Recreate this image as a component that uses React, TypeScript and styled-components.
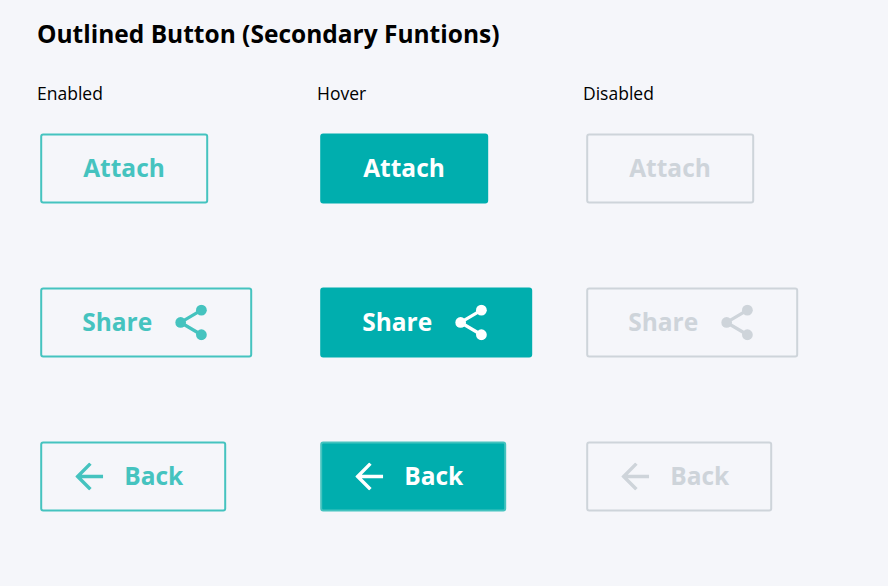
import React from 'react';
import styled, { createGlobalStyle, css } from 'styled-components';

type State = 'enabled' | 'hover' | 'disabled';
type Kind = 'attach' | 'share' | 'back';

const GlobalStyle = createGlobalStyle`
  body { margin: 0; background: #f5f6fa; }
  * { box-sizing: border-box; }
`;

const Page = styled.main`
  width: 888px;
  height: 586px;
  padding: 16px 0 0 37px;
  background: #f5f6fa;
  color: #000;
  font-family: 'Open Sans', 'Noto Sans', sans-serif;
`;

const Title = styled.h1`
  margin: 0;
  font-size: 24.5px;
  line-height: 36px;
  font-weight: 700;
  white-space: nowrap;
`;

const Columns = styled.div`
  display: grid;
  grid-template-columns: 280px 266px 280px;
  margin-top: 29px;
`;

const Column = styled.section`
  display: flex;
  flex-direction: column;
  align-items: flex-start;
`;

const Label = styled.h2`
  margin: 0 0 28px;
  font-size: 17.5px;
  line-height: 24px;
  font-weight: 400;
`;

const palette = {
  enabled: css`color: #45c3bf; border-color: #45c3bf; background: transparent;`,
  hover: css`color: #fff; border-color: #00aeae; background: #00aeae;`,
  disabled: css`color: #ced4da; border-color: #ced4da; background: transparent;`,
};

const widths = { attach: 168, share: 212, back: 186 };
const pads = { attach: 41, share: 40, back: 33 };

const OutlinedButton = styled.button<{ $state: State; $kind: Kind }>`
  display: flex;
  align-items: center;
  width: ${p => widths[p.$kind]}px;
  height: 70px;
  margin: 0 0 84px 3px;
  padding: 0 0 0 ${p => pads[p.$kind]}px;
  border: 2px solid;
  border-radius: 3px;
  font: 700 24.5px/34px 'Open Sans', 'Noto Sans', sans-serif;
  transform: translate(0.2px, 0.45px);
  ${p => palette[p.$state]}
  ${p => p.$kind === 'back' && p.$state === 'hover' && css`border-color: #45c3bf;`}
`;

const ShareGlyph = styled.svg`
  width: 32px;
  height: 36px;
  margin-left: 23px;
  flex: none;
`;

const ArrowGlyph = styled.svg`
  width: 28px;
  height: 28px;
  margin-right: 21px;
  flex: none;
`;

const ShareIcon = () => (
  <ShareGlyph viewBox="0 0 32 36" fill="currentColor">
    <path d="M26.2 5.7 5.4 18l20.8 12.3" fill="none" stroke="currentColor" strokeWidth="3.3" />
    <circle cx="26.2" cy="5.7" r="5.4" />
    <circle cx="5.4" cy="18" r="5.4" />
    <circle cx="26.2" cy="30.3" r="5.4" />
  </ShareGlyph>
);

const ArrowIcon = () => (
  <ArrowGlyph viewBox="0 0 28 28" fill="none" stroke="currentColor" strokeWidth="3.4">
    <path d="M28 14H3M15.2 1.2 2.4 14l12.8 12.8" />
  </ArrowGlyph>
);

const columns: { label: string; state: State }[] = [
  { label: 'Enabled', state: 'enabled' },
  { label: 'Hover', state: 'hover' },
  { label: 'Disabled', state: 'disabled' },
];

export default function App() {
  return (
    <Page>
      <GlobalStyle />
      <Title>Outlined Button (Secondary Funtions)</Title>
      <Columns>
        {columns.map(({ label, state }) => (
          <Column key={state}>
            <Label>{label}</Label>
            <OutlinedButton $state={state} $kind="attach">Attach</OutlinedButton>
            <OutlinedButton $state={state} $kind="share">Share<ShareIcon /></OutlinedButton>
            <OutlinedButton $state={state} $kind="back"><ArrowIcon />Back</OutlinedButton>
          </Column>
        ))}
      </Columns>
    </Page>
  );
}
